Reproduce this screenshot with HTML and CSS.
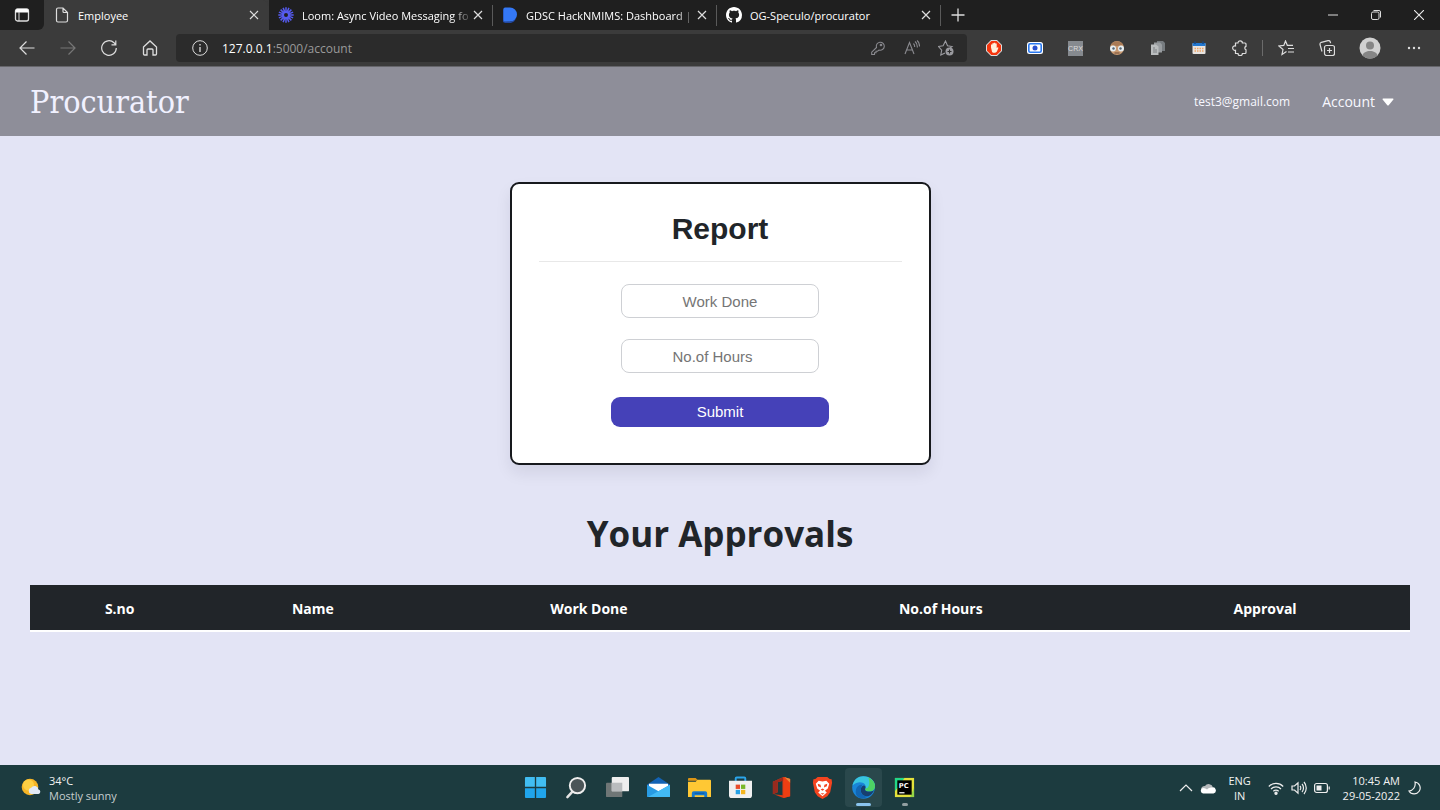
FILE: index.html
```html
<!DOCTYPE html>
<html lang="en">
<head>
<meta charset="utf-8">
<title>Employee</title>
<link rel="stylesheet" href="styles.css">
</head>
<body>
<div class="tabstrip">
  <button class="tab-actions" aria-label="Tab actions"><svg class="ico16" viewBox="0 0 16 16"><rect x="1.5" y="2" width="13" height="12" rx="2" fill="none" stroke="#ddd" stroke-width="1.3"/><path d="M1.5 5.5V4a2 2 0 0 1 2-2h9a2 2 0 0 1 2 2v1.500z" fill="#fff"/><path d="M5 5v9" stroke="#ddd"/></svg></button>
  <div class="tab active">
    <svg class="ico16" viewBox="0 0 16 16" fill="none" stroke="#ddd" stroke-width="1.200"><path d="M2.500 2.500a1.500 1.500 0 0 1 1.500-1.500h5l4.500 4.500v8a1.500 1.500 0 0 1-1.500 1.500h-8a1.500 1.500 0 0 1-1.500-1.500zM9 1v3.500a1 1 0 0 0 1 1h3.500"/></svg>
    <span class="tab-title">Employee</span>
    <button class="close" aria-label="Close Employee"><svg class="ico10" viewBox="0 0 10 10"><path d="M1 1l8 8M9 1l-8 8" stroke="#ddd" stroke-width="1.200"/></svg></button>
  </div>
  <div class="tab">
    <svg class="ico16" viewBox="0 0 16 16" stroke="#565bef" stroke-width="1.500"><path d="M8 .3v15.400M.3 8h15.400M2.600 2.600l10.800 10.800M13.400 2.600L2.600 13.400M5.100.9l5.800 14.200M10.900.9L5.100 15.100M.9 5.100l14.200 5.800M.9 10.900l14.200-5.800"/><circle cx="8" cy="8" r="3" fill="#1f1f1f" stroke-width="2"/></svg>
    <span class="tab-title fade">Loom: Async Video Messaging fo</span>
    <button class="close" aria-label="Close Loom"><svg class="ico10" viewBox="0 0 10 10"><path d="M1 1l8 8M9 1l-8 8" stroke="#ddd" stroke-width="1.200"/></svg></button>
  </div>
  <div class="tab">
    <svg class="ico16" viewBox="0 0 16 16"><path d="M1 3l1-2v13l7 .5 5-3-2 3-3 1.500H3l-2-1z" fill="#2347a0"/><path d="M1.500 2a1.500 1.500 0 0 1 1.500-1.500h5a7 7 0 0 1 0 14H3A1.500 1.500 0 0 1 1.500 13z" fill="#3478f6"/></svg>
    <span class="tab-title fade">GDSC HackNMIMS: Dashboard |</span>
    <button class="close" aria-label="Close GDSC"><svg class="ico10" viewBox="0 0 10 10"><path d="M1 1l8 8M9 1l-8 8" stroke="#ddd" stroke-width="1.200"/></svg></button>
  </div>
  <div class="tab">
    <svg class="ico16" viewBox="0 0 16 16" fill="#fff"><path d="M8 0C3.580 0 0 3.580 0 8c0 3.540 2.290 6.530 5.470 7.590.4.070.55-.17.55-.38 0-.19-.01-.82-.01-1.490-2.010.37-2.530-.49-2.690-.94-.09-.23-.48-.94-.82-1.130-.28-.15-.68-.52-.01-.53.63-.01 1.080.58 1.230.82.72 1.210 1.870.87 2.330.66.07-.52.28-.87.51-1.070-1.780-.2-3.640-.89-3.640-3.950 0-.87.31-1.590.82-2.150-.08-.2-.36-1.020.08-2.120 0 0 .67-.21 2.200.82.64-.18 1.320-.27 2-.27s1.360.09 2 .27c1.530-1.040 2.200-.82 2.200-.82.44 1.100.16 1.920.08 2.120.51.56.82 1.270.82 2.150 0 3.070-1.870 3.750-3.650 3.950.29.25.54.73.54 1.480 0 1.070-.01 1.930-.01 2.200 0 .21.15.46.55.38A8.010 8.010 0 0 0 16 8c0-4.420-3.580-8-8-8z"/></svg>
    <span class="tab-title">OG-Speculo/procurator</span>
    <button class="close" aria-label="Close OG-Speculo"><svg class="ico10" viewBox="0 0 10 10"><path d="M1 1l8 8M9 1l-8 8" stroke="#ddd" stroke-width="1.200"/></svg></button>
  </div>
  <button class="new-tab" aria-label="New tab"><svg class="ico16" viewBox="0 0 16 16"><path d="M8 1.500v13M1.500 8h13" stroke="#ddd" stroke-width="1.300"/></svg></button>
  <div class="window-controls">
    <button aria-label="Minimize"><svg class="ico10" viewBox="0 0 10 10"><path d="M0 5h10" stroke="#ddd"/></svg></button>
    <button aria-label="Restore"><svg class="ico10" viewBox="0 0 10 10" fill="none" stroke="#ddd"><rect x=".5" y="2" width="7.500" height="7.500" rx="1.500"/><path d="M2.500.5H8A1.500 1.500 0 0 1 9.500 2v5.500"/></svg></button>
    <button aria-label="Close window"><svg class="ico10" viewBox="0 0 10 10"><path d="M0 0l10 10M10 0L0 10" stroke="#eee" stroke-width="1.100"/></svg></button>
  </div>
</div>
<div class="toolbar">
  <button class="tool" aria-label="Back"><svg class="ico16" viewBox="0 0 16 16" fill="none" stroke="#ddd" stroke-width="1.200"><path d="M15.500 8H1M7.500 1.500L1 8l6.500 6.500"/></svg></button>
  <button class="tool" aria-label="Forward"><svg class="ico16" viewBox="0 0 16 16" fill="none" stroke="#777" stroke-width="1.200"><path d="M.5 8H15M8.500 1.500L15 8l-6.500 6.500"/></svg></button>
  <button class="tool" aria-label="Refresh"><svg class="ico16" viewBox="0 0 16 16" fill="none" stroke="#ddd" stroke-width="1.200"><path d="M15.300 8A7.300 7.300 0 1 1 13 2.700L14.500 4.500M14.800.5v4.300h-4.300"/></svg></button>
  <button class="tool" aria-label="Home"><svg class="ico16" viewBox="0 0 16 16" fill="none" stroke="#ddd" stroke-width="1.300"><path d="M1.500 7L8 1l6.500 6v7a1 1 0 0 1-1 1h-2.500v-5a1 1 0 0 0-1-1H6a1 1 0 0 0-1 1v5H2.500a1 1 0 0 1-1-1z"/></svg></button>
  <div class="address">
    <svg class="ico16" viewBox="0 0 16 16" fill="none" stroke="#ddd"><circle cx="8" cy="8" r="7.300"/><path d="M8 7v5M8 4v1.500" stroke-width="1.300"/></svg>
    <span class="url"><span class="host">127.0.0.1</span>:5000/account</span>
    <button class="addr-btn" aria-label="Passwords"><svg class="ico16" viewBox="0 0 16 16" fill="none" stroke="#8a8a8f" stroke-width="1.100"><path d="M6.500 7.500A4 4 0 1 1 9 10L7.500 11.200H6v1.600H4.500v1.700H1.700v-2.300z"/><circle cx="11" cy="5" r=".8"/></svg></button>
    <button class="addr-btn" aria-label="Read aloud"><svg class="ico16" viewBox="0 0 16 16" fill="none" stroke="#8a8a8f" stroke-width="1.100"><path d="M1 14L5.500 2.500 10 14M2.600 10h5.800M9.500 3.500c1 1 1.200 2 1.200 3.500M11 1.500c2 1.500 2.500 3.500 2.300 6M13 .5c2 1.500 2.600 3.500 2.500 6"/></svg></button>
    <button class="addr-btn" aria-label="Add favorite"><svg class="ico16" viewBox="0 0 16 16" fill="none" stroke="#9a9a9f" stroke-width="1.100"><path d="M7 13l-4.200 2 .9-4.800L.5 6.500l4.600-.7L7.500 1l2 4.800 4.500.7-2 1.500"/><circle cx="11.500" cy="11.500" r="4" fill="#9a9a9f" stroke="none"/><path d="M11.500 9.500v4M9.500 11.500h4" stroke="#2b2b2b"/></svg></button>
  </div>
  <div class="extensions">
    <button class="tool" aria-label="Content blocker"><svg class="ico16" viewBox="0 0 16 16"><path d="M5 0h6l5 5v6l-5 5H5l-5-5V5z" fill="#ddd"/><path d="M5.300 1h5.400L15 5.300v5.400L10.700 15H5.300L1 10.700V5.300z" fill="#f5350d"/><path d="M5 7.500V4.500h1.400V3.300h1.500V2.800h1.400v.7h1.400V8l1-.8.8.6-1.600 3.800c-1 1.600-4 1.600-4.800.4z" fill="#fff1dc"/></svg></button>
    <button class="tool" aria-label="Screen recorder"><svg class="ico16" viewBox="0 0 16 16"><rect x="0" y="2" width="16" height="12" rx="2.500" fill="#fff"/><rect x="1.800" y="3.800" width="12.400" height="8.400" rx="1.500" fill="#fff" stroke="#2878f0" stroke-width="1.600"/><circle cx="8" cy="8" r="2.500" fill="#2850d0"/></svg></button>
    <button class="tool" aria-label="CRX"><span class="crx">CRX</span></button>
    <button class="tool" aria-label="Character extension"><svg class="ico16" viewBox="0 0 16 16"><circle cx="8" cy="8" r="7" fill="#c99a72"/><path d="M2 5c2-5 10-5 12 0L8 6z" fill="#a97a55"/><circle cx="4" cy="8.500" r="3" fill="#e6eef2"/><circle cx="12" cy="8.500" r="3" fill="#e6eef2"/><circle cx="4.500" cy="8.500" r="1.200" fill="#546573"/><circle cx="11.500" cy="8.500" r="1.200" fill="#546573"/><path d="M5.500 13h5" stroke="#734e38"/></svg></button>
    <button class="tool" aria-label="Copy extension"><svg class="ico16" viewBox="0 0 16 16"><path d="M7 1h6l2 2v8H7z" fill="#777c80"/><path d="M4 2.500h6l2 2v8H4z" fill="#999da0"/><path d="M1 4.500h5l2.500 2V15H1z" fill="#babdbe"/><path d="M3 8h2M3 10h4M3 12h4" stroke="#7c8083"/></svg></button>
    <button class="tool" aria-label="Calendar"><svg class="ico16" viewBox="0 0 16 16"><rect x="1.500" y="3" width="13" height="11" rx="1" fill="#e8e4e1"/><path d="M1.500 3h13v3h-13z" fill="#2277cf"/><path d="M4 1.500V4M12 1.500V4" stroke="#174a87" stroke-width="1.500"/><path d="M3.500 8.500h9M3.500 11h9" stroke="#f0a565" stroke-width="1.500" stroke-dasharray="1.500 1"/></svg></button>
    <button class="tool" aria-label="Extensions"><svg class="ico16" viewBox="0 0 16 16" fill="none" stroke="#ddd" stroke-width="1.200"><path d="M3.500 3H6a2.200 2.200 0 0 1 4.400 0H13a1 1 0 0 1 1 1v2.400a1.800 1.800 0 0 0 0 3.400V12.500a1 1 0 0 1-1 1h-2.600a2.200 2.200 0 0 1-4.400 0H3.500v-3.300a2.200 2.200 0 1 1 0-4.200z"/></svg></button>
    <span class="divider"></span>
    <button class="tool" aria-label="Favorites"><svg class="ico16" viewBox="0 0 16 16" fill="none" stroke="#ddd" stroke-width="1.200"><path d="M8.500 11.500L4 14.500l1-5L.8 6l5-.6L7.500 1l1.800 4.300H15M10 8.500h6M10 12h6"/></svg></button>
    <button class="tool" aria-label="Collections"><svg class="ico16" viewBox="0 0 16 16" fill="none" stroke="#ddd" stroke-width="1.200"><rect x="5.500" y="5.500" width="10" height="10" rx="2"/><path d="M10.500 8v5M8 10.500h5M3 11.500L1 4.500a2 2 0 0 1 1.300-2.200L9 .6a2 2 0 0 1 2.300 1.400l.3 1.200"/></svg></button>
    <button class="tool profile" aria-label="Profile"><svg class="ico22" viewBox="0 0 22 22"><circle cx="11" cy="11" r="10.500" fill="#d0d0d0"/><circle cx="11" cy="8.500" r="4" fill="#858585"/><path d="M3.500 18.500c1-6 14-6 15 0a10.500 10.500 0 0 1-15 0z" fill="#858585"/></svg></button>
    <button class="tool" aria-label="Settings"><svg class="ico16" viewBox="0 0 16 16" fill="#ddd"><circle cx="3" cy="8" r="1.200"/><circle cx="8" cy="8" r="1.200"/><circle cx="13" cy="8" r="1.200"/></svg></button>
  </div>
</div>
<header class="navbar">
  <a class="brand" href="#">Procurator</a>
  <nav class="nav-links">
    <span class="email">test3@gmail.com</span>
    <button class="account">Account <svg class="caret" viewBox="0 0 12 8"><path d="M1 .5h10a.6.6 0 0 1 .4 1L6.700 7.200a1 1 0 0 1-1.400 0L.6 1.500a.6.6 0 0 1 .4-1z" fill="#fff"/></svg></button>
  </nav>
</header>
<main class="content">
  <form class="card">
    <h1 class="card-title">Report</h1>
    <input class="field" type="text" placeholder="Work Done" aria-label="Work Done">
    <input class="field" type="number" placeholder="No.of Hours" aria-label="No.of Hours">
    <button class="submit" type="button">Submit</button>
  </form>
  <h2 class="section-title">Your Approvals</h2>
  <table class="approvals">
    <colgroup><col class="c-sno"><col class="c-name"><col class="c-work"><col class="c-hours"><col class="c-approval"></colgroup>
    <thead><tr><th scope="col">S.no</th><th scope="col">Name</th><th scope="col">Work Done</th><th scope="col">No.of Hours</th><th scope="col">Approval</th></tr></thead>
    <tbody></tbody>
  </table>
</main>
<footer class="taskbar">
  <div class="weather">
    <svg class="ico20" viewBox="0 0 20 20"><circle cx="9" cy="9" r="8.300" fill="#f6b526"/><circle cx="7.500" cy="7" r="5.500" fill="#ffd043"/><path d="M10 16a3.200 3.200 0 0 1 .2-6.200 4 4 0 0 1 7.300 1.700A2.300 2.300 0 0 1 17.500 16z" fill="#e2e9f5"/></svg>
    <div><div class="temp">34°C</div><div class="sky">Mostly sunny</div></div>
  </div>
  <div class="apps">
    <button class="app" aria-label="Start"><svg class="ico23" viewBox="0 0 24 24" fill="#41bdf2"><path d="M2 1h9.300v10.300H1V2a1 1 0 0 1 1-1zM12.700 1H22a1 1 0 0 1 1 1v9.300H12.700z"/><path d="M1 12.700h10.300V23H2a1 1 0 0 1-1-1zM12.700 12.700H23V22a1 1 0 0 1-1 1h-9.300z" fill="#20a5ec"/></svg></button>
    <button class="app" aria-label="Search"><svg class="ico23" viewBox="0 0 24 24"><path d="M8 16l-5.500 6" stroke="#e4e4e4" stroke-width="2.600" stroke-linecap="round"/><circle cx="13" cy="10" r="8" fill="#4b5558" stroke="#eee" stroke-width="2"/></svg></button>
    <button class="app" aria-label="Task view"><svg class="ico23" viewBox="0 0 24 24"><rect x="0" y="7" width="17" height="15" rx="1" fill="#6f7676"/><rect x="6" y="1" width="18" height="15" rx="1" fill="#eee"/><path d="M6 7h11v9H6z" fill="#b9bcbe"/></svg></button>
    <button class="app" aria-label="Mail"><svg class="ico23" viewBox="0 0 24 24"><path d="M0 9l12-8 12 8v5H0z" fill="#1363b5"/><path d="M2 8h20v5l-10 5L2 13z" fill="#fff"/><path d="M0 9l12 7 12-7v12a1 1 0 0 1-1 1H1a1 1 0 0 1-1-1z" fill="#289be3"/><path d="M1 22l23-13v12a1 1 0 0 1-1 1z" fill="#42baf5"/></svg></button>
    <button class="app" aria-label="File Explorer"><svg class="ico23" viewBox="0 0 24 24"><path d="M0 3a1 1 0 0 1 1-1h7l3 3H0z" fill="#dc9415"/><path d="M0 6h8l2-2h13a1 1 0 0 1 1 1v17H0z" fill="#ffc834"/><path d="M4 22v-4a2 2 0 0 1 2-2h12a2 2 0 0 1 2 2v4h-3v-2H7v2z" fill="#167acc"/><path d="M7 18h10" stroke="#0c57a4"/></svg></button>
    <button class="app" aria-label="Store"><svg class="ico23" viewBox="0 0 24 24"><path d="M7 6V2.500A1 1 0 0 1 8 1.500h8a1 1 0 0 1 1 1V6" fill="none" stroke="#2aa5eb" stroke-width="2"/><path d="M0 5h24v15a3 3 0 0 1-3 3H3a3 3 0 0 1-3-3z" fill="#f0f0f0"/><path d="M7 9h4.500v4.500H7z" fill="#e94d2b"/><path d="M12.500 9H17v4.500h-4.500z" fill="#78b82a"/><path d="M7 14.500h4.500V19H7z" fill="#28a1e5"/><path d="M12.500 14.500H17V19h-4.500z" fill="#f4b51f"/></svg></button>
    <button class="app" aria-label="Office"><svg class="ico23" viewBox="0 0 24 24"><path d="M3 6l11-5 7 2v18l-7 2-10-4 9 1V5L8 6.500V17l-5 2z" fill="#d83b18"/><path d="M3 6l11-5v4L8 6.500V17l-5 2z" fill="#992a1e"/><path d="M14 1l7 2v18l-7 2z" fill="#ef3e12"/><path d="M15 1l6 2v4z" fill="#e88b3c"/></svg></button>
    <button class="app" aria-label="Brave"><svg class="ico23" viewBox="0 0 24 24"><path d="M7 1h10l2.500 2 2 .5L22 7l-2 10-3 4-5 3-5-3-3-4L2 7l.5-3.500 2-.5z" fill="#f4441f"/><path d="M8 5l4 .7L16 5l3 3-1.500 5-3 2.500 2 1.800L12 21l-4.500-3.700 2-1.800-3-2.500L5 8z" fill="#fff"/><path d="M7 8l3 1 .5 3-3-1.200zM17 8l-3 1-.5 3 3-1.200zM10 14l2-1 2 1-2 1.500zM10 18h4l-2 1.500z" fill="#f4441f"/></svg></button>
    <button class="app running current" aria-label="Edge"><svg class="ico23" viewBox="0 0 24 24"><circle cx="12" cy="12" r="11.800" fill="#1985d8"/><path d="M.5 10C2 3 7 0 12 .2c7 0 12 5 12 10 0 4-3 6-6 6-4 0-5-2-4-3.500C16 8 8 3 .5 10z" fill="#38c5df"/><path d="M17 1.500c4 2 7 5 7 9 0 4-3 5.700-6 5.700-4 0-5-2-4-3.500 2 1 6-3 3-11.200z" fill="#4ed264"/><path d="M14 12.700c-1 1.500 0 3.500 4 3.500 2 0 4-.7 5-1.700-1 3-3 5.500-6 6.500-6 1-9-4-7.500-8.500C10.500 9 15 9 14 12.700z" fill="#173f70"/><path d="M9.500 12.500C8 17 11 22 17 21c-8 5-14 1-13-6 .5-4 3-6 7-6-1 1-1.300 2.500-1.500 3.500z" fill="#1266b3"/></svg></button>
    <button class="app running" aria-label="PyCharm"><svg class="ico23" viewBox="0 0 24 24"><path d="M2 2h20v20H2z" fill="#e4e13b"/><path d="M2 2h10L2 16z" fill="#21d789"/><path d="M18 22l4-10v10z" fill="#95d647"/><path d="M4.500 4.500h15v15h-15z"/><path d="M6.500 17.500H12" stroke="#fff" stroke-width="1.300"/><text class="pc" x="6" y="12.500" fill="#fff">PC</text></svg></button>
  </div>
  <div class="tray">
    <button class="tray-btn" aria-label="Show hidden icons"><svg class="ico14" viewBox="0 0 14 14"><path d="M1 10l6-6 6 6" fill="none" stroke="#eee" stroke-width="1.200"/></svg></button>
    <svg class="ico16" viewBox="0 0 16 16"><path d="M1 9a4 4 0 0 1 4-3 4.500 4.500 0 0 1 8 1.500L6 12z" fill="#b5b9bb"/><path d="M3 13.500a2.800 2.800 0 0 1 0-5.500c2 0 3 1 4 1.500 2-2 4-2 5-2a3 3 0 0 1 1.500 6z" fill="#fff"/></svg>
    <div class="lang">ENG<br>IN</div>
    <div class="status">
      <svg class="ico16" viewBox="0 0 16 16" fill="none" stroke="#eee" stroke-width="1.200"><path d="M.8 6.500a10 10 0 0 1 14.400 0M3 9a7 7 0 0 1 10 0M5.300 11.300a4 4 0 0 1 5.400 0"/><circle cx="8" cy="13.300" r="1.100" fill="#eee"/></svg>
      <svg class="ico16" viewBox="0 0 16 16" fill="none" stroke="#eee" stroke-width="1.200"><path d="M1 6h2.500L7 2.800v10.400L3.500 10H1zM9 6c1 1 1 3 0 4M11 4c2 2 2 6 0 8M13 2c3 3.500 3 8.500 0 12"/></svg>
      <svg class="ico16" viewBox="0 0 16 16" fill="none" stroke="#eee" stroke-width="1.200"><rect x=".6" y="3.500" width="12.800" height="9" rx="2"/><path d="M15.200 6.500v3"/><path d="M2.500 5.500h5v5h-5z" fill="#eee" stroke="none"/></svg>
    </div>
    <div class="clock">10:45 AM<br>29-05-2022</div>
    <svg class="ico14" viewBox="0 0 14 14" fill="none" stroke="#eee" stroke-width="1.200"><path d="M7 1a6 6 0 1 1-6 9c4-.3 7-4 6-9z"/></svg>
  </div>
</footer>
</body>
</html>
```

FILE: styles.css
```css
* { box-sizing: border-box; }
body {
  margin: 0;
  min-height: 100vh;
  display: flex;
  flex-direction: column;
  background: #e3e4f5;
  color: #212529;
  font-family: "Open Sans", "Noto Sans", sans-serif;
  font-size: 12px;
}
button { border: 0; padding: 0; background: none; color: inherit; font-family: inherit; }
svg { display: block; flex: none; }
.ico10 { width: 10px; height: 10px; }
.ico14 { width: 14px; height: 14px; }
.ico16 { width: 16px; height: 16px; }
.ico20 { width: 20px; height: 20px; }
.ico22 { width: 22px; height: 22px; }
.ico23 { width: 23px; height: 23px; }

/* Browser tabs */
.tabstrip { display: flex; height: 30px; background: #3b3b3b; color: #fff; font-size: 11px; }
.tab-actions { width: 44px; display: grid; place-items: center; background: #1f1f1f; border-bottom-right-radius: 6px; }
.tab {
  flex: 0 1 224px;
  min-width: 0;
  display: flex;
  align-items: center;
  padding: 0 9px;
  background: #1f1f1f;
  border-right: 1px solid #1f1f1f;
  border-image: linear-gradient(#1f1f1f 6px, #5a5a5a 6px, #5a5a5a 25px, #1f1f1f 25px) 1;
}
.tab.active { flex-basis: 225px; padding-left: 10px; background: #3b3b3b; border-image: none; border-color: #3b3b3b; border-radius: 6px 6px 0 0; }
.tab-title { flex: 1; padding-left: 8px; white-space: nowrap; }
.fade { -webkit-mask-image: linear-gradient(90deg, #000 88%, transparent); mask-image: linear-gradient(90deg, #000 88%, transparent); }
.new-tab { width: 33px; display: grid; place-items: center; background: #1f1f1f; }
.window-controls { flex: 1; display: flex; justify-content: flex-end; background: #1f1f1f; }
.window-controls button { width: 43px; display: grid; place-items: center; }

/* Browser toolbar */
.toolbar { display: flex; align-items: center; height: 37px; padding: 0 6px; background: #3b3b3b; border-bottom: 1px solid #66666b; }
.tool { width: 41px; height: 30px; display: grid; place-items: center; }
.profile { width: 46px; }
.address {
  flex: 1;
  height: 28px;
  margin-left: 6px;
  padding: 0 4px 0 16px;
  display: flex;
  align-items: center;
  background: #2b2b2b;
  border-radius: 4px;
}
.url { flex: 1; padding-left: 14px; color: #9a9a9a; font-size: 12px; }
.host { color: #fff; }
.addr-btn { width: 34px; height: 26px; display: grid; place-items: center; }
.extensions { display: flex; align-items: center; padding-left: 6px; }
.divider { width: 1px; height: 16px; margin: 0 2px; background: #6b6b6b; }
.crx { width: 15px; height: 15px; background: #868a8f; color: #ddd; font: 7px/15px "Liberation Sans", sans-serif; text-align: center; }

/* Site header */
.navbar {
  display: flex;
  align-items: center;
  justify-content: space-between;
  height: 69px;
  padding: 0 46px 0 30px;
  background: #8e8e99;
  color: #f8f8ff;
}
.brand { color: #f1f1ff; font: 32px/40px "DejaVu Serif Condensed", "DejaVu Serif", serif; text-decoration: none; }
.nav-links { display: flex; align-items: center; gap: 32px; }
.email { font-size: 12px; }
.account { display: flex; align-items: center; gap: 7px; font-size: 14px; }
.caret { width: 12px; height: 8px; }

/* Page */
.content { flex: 1; padding: 46px 30px 0; text-align: center; }
.card {
  max-width: 421px;
  margin: 0 auto;
  padding: 27px 27px 36px;
  display: flex;
  flex-direction: column;
  align-items: center;
  background: #fff;
  border: 2px solid #17191d;
  border-radius: 9px;
  box-shadow: 0 8px 16px rgba(0, 0, 40, 0.08);
  font-family: "Liberation Sans", Arial, sans-serif;
}
.card-title {
  width: 100%;
  margin: 0 0 22px;
  padding-bottom: 14px;
  border-bottom: 1px solid #e8e8e8;
  font-size: 30px;
  line-height: 36px;
}
.field {
  width: 198px;
  height: 34px;
  margin-bottom: 21px;
  padding: 0 12px;
  border: 1px solid #ced0d4;
  border-radius: 8px;
  background: #fff;
  font: 15px/20px "Liberation Sans", Arial, sans-serif;
  text-align: center;
}
.field::placeholder { color: #757575; }
.submit {
  width: 218px;
  height: 30px;
  margin-top: 3px;
  border-radius: 9px;
  background: #4541b8;
  color: #fff;
  font: 15px/20px "Liberation Sans", Arial, sans-serif;
}
.section-title { margin: 44px 0 26px; font-size: 35px; line-height: 50px; }
.approvals { width: 100%; border-collapse: collapse; table-layout: fixed; border-bottom: 2px solid #fff; }
.approvals th { height: 46px; padding: 2px 0 0; background: #212529; color: #fff; font-size: 14px; }
.c-sno { width: 13%; }
.c-name { width: 15%; }
.c-work { width: 25%; }
.c-hours { width: 26%; }
.c-approval { width: 21%; }

/* Taskbar */
.taskbar {
  display: grid;
  grid-template-columns: 1fr auto 1fr;
  align-items: center;
  height: 45px;
  background: #1c3b3f;
  color: #f2f2f2;
  font-size: 11px;
  line-height: 15px;
}
.weather { display: flex; align-items: center; gap: 8px; padding-left: 21px; }
.sky { color: #c6cdce; }
.apps { display: flex; gap: 4px; }
.app { position: relative; width: 37px; height: 39px; display: grid; place-items: center; border-radius: 4px; }
.app.current { background: #2a484c; }
.running::after { content: ""; position: absolute; bottom: 1px; left: 16px; width: 6px; height: 3px; border-radius: 2px; background: #929fa1; }
.current::after { left: 11px; width: 15px; background: #8ac4ee; }
.pc { font: bold 7px "DejaVu Sans", sans-serif; }
.tray { display: flex; align-items: center; justify-content: flex-end; padding-right: 18px; }
.tray-btn { margin-right: 7px; }
.lang { width: 24px; margin: 0 16px 0 12px; text-align: center; }
.status { display: flex; gap: 7px; margin-right: 13px; }
.clock { margin-right: 8px; text-align: right; white-space: nowrap; }
```
